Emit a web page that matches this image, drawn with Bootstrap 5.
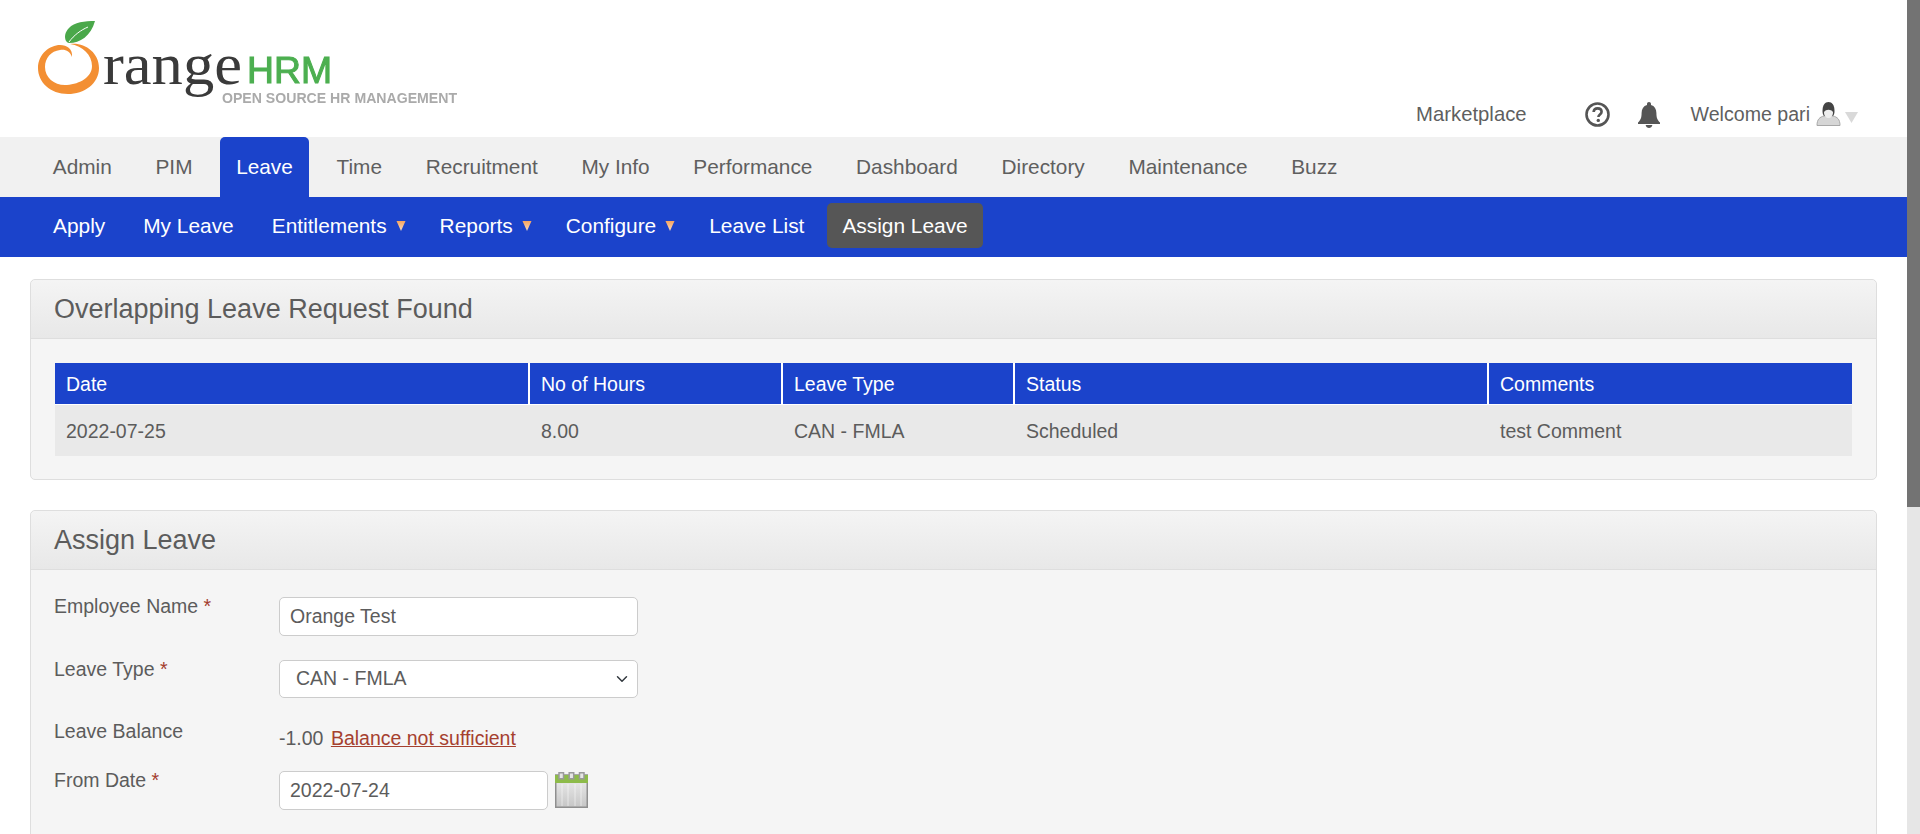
<!DOCTYPE html>
<html lang="en">
<head>
  <meta charset="UTF-8" />
  <meta name="viewport" content="width=device-width, initial-scale=1.0" />
  <title>OrangeHRM - Assign Leave</title>
  <link href="https://cdn.jsdelivr.net/npm/bootstrap@5.3.3/dist/css/bootstrap.min.css" rel="stylesheet" />
  <style>
    html, body { height: 834px; overflow: hidden; }
    body {
      font-family: "Liberation Sans", Arial, sans-serif;
      color: #5c5c5c;
      font-size: 19.5px;
      background: #fff;
    }
    /* page + fake scrollbar */
    .page-wrap { height: 834px; }
    .page-main { flex: 1 1 auto; min-width: 0; overflow: hidden; }
    .fake-scroll { flex: 0 0 13px; width: 13px; background: #e6e6e6; }
    .fake-thumb { height: 507px; background: #737373; }

    /* top header */
    .top-head { height: 137px; }
    .logo-svg { filter: blur(.4px); }
    .top-links { padding: 102px 49px 0 0; height: 137px; font-size: 20.3px; color: #5f5f5f; }
    .top-links a { color: inherit; text-decoration: none; }
    .market-link { margin-right: 58px; line-height: 25px; }
    .bell-ico { margin: 0 31px 0 28px; }
    .welcome-txt { line-height: 25px; margin-right: 6px; font-size: 19.6px; }

    /* main tabs */
    .main-tabs { height: 60px; background: #f1f1f1; padding-left: 37px; gap: 12px; }
    .main-tabs a {
      display: block; padding: 0 15.85px; height: 60px; line-height: 60px;
      font-size: 20.8px; color: #5f5f5f; text-decoration: none; border-radius: 5px 5px 0 0;
    }
    .main-tabs a.on { background: #1b43cb; color: #fff; }

    /* sub menu */
    .sub-tabs { height: 60px; background: #1b43cb; padding: 6px 0 0 38px; gap: 8px; }
    .sub-tabs a {
      display: block; position: relative; height: 45px; line-height: 45px; padding: 0 15px;
      font-size: 20.88px; color: #fff; text-decoration: none; border-radius: 5px;
    }
    .sub-tabs a.has-arrow { padding-right: 30px; }
    .sub-tabs a.on { background: #565656; }
    .sub-arrow { position: absolute; right: 11px; top: 18px; }

    /* panels */
    .hr-panel.card { margin: 22px 30px 0 30px; background: #f5f5f5; border: 1px solid #dedede; border-radius: 5px; }
    .hr-panel + .hr-panel.card { margin-top: 30px; }
    .hr-panel .card-header {
      height: 59px; line-height: 58px; padding: 0 0 0 23px; font-size: 27px; color: #5c5c5c;
      background: linear-gradient(#f4f4f4, #e8e8e8); border-bottom: 1px solid #dedede;
    }
    .over-body { padding: 24px 24px 23px 24px; }
    .form-body { padding: 27px 23px 0 23px; height: 400px; }

    .leave-tbl { table-layout: fixed; width: 1797px; border-collapse: separate; border-spacing: 0; font-size: 19.5px; }
    .leave-tbl th {
      background: #1b43cb; color: #fff; font-weight: 400; height: 42px; padding: 0 11px;
      border-right: 2px solid #fff; border-bottom: 1px solid #fff; line-height: 38px;
    }
    .leave-tbl th:last-child { border-right: 0; }
    .leave-tbl td { background: #e9e9e9; height: 51px; padding: 2px 11px 0 11px; color: #5c5c5c; }

    /* form rows */
    .f-row { display: flex; margin-bottom: 24px; }
    .f-label { flex: 0 0 225px; line-height: 16px; padding-top: 1px; font-size: 19.5px; color: #5c5c5c; }
    .req { color: #a33c2e; }
    .f-input.form-control, .f-input.form-select {
      width: 359px; height: 39px; font-size: 19.5px; color: #5c5c5c; border: 1px solid #ccc; border-radius: 5px;
      padding: 0 10px; background-color: #fff;
    }
    .f-input.form-select { padding-left: 16px; padding-right: 36px; height: 38px; background-position: right 7px center; }
    .f-input.date-in { width: 269px; }
    .cal-ico { margin-left: 7px; margin-top: 1px; }
    .bal-line { margin-top: 7px; line-height: 18px; }
    .bal-warn { color: #a5402f; margin-left: 2px; text-decoration: underline; }
  </style>
</head>
<body>
<svg width="0" height="0" class="position-absolute">
  <defs>
    <linearGradient id="calGrad" x1="0" y1="0" x2="0" y2="1"><stop offset="0" stop-color="#eeeeee"/><stop offset="1" stop-color="#c6c6c6"/></linearGradient>
    <linearGradient id="arrowGrad" x1="0" y1="0" x2="0" y2="1"><stop offset="0" stop-color="#f7a45e"/><stop offset="1" stop-color="#f9dcc0"/></linearGradient>
    <symbol id="calIcon" viewBox="0 0 33 36">
      <rect x=".75" y="3" width="31.5" height="32.25" fill="url(#calGrad)" stroke="#8f8f8f" stroke-width="1.5"/>
      <rect x="0" y="3" width="33" height="8" fill="#8dbb4a"/>
      <g fill="#e6e6e6" stroke="#9a9a9a" stroke-width="1.5">
        <rect x="4" y=".75" width="4.5" height="6"/>
        <rect x="14.2" y=".75" width="4.5" height="6"/>
        <rect x="24.5" y=".75" width="4.5" height="6"/>
      </g>
      <g stroke="#fff" stroke-width="1" opacity=".5">
        <path d="M7 12V34M13 12V34M20 12V34M26 12V34"/>
      </g>
    </symbol>
  </defs>
</svg>

<div class="page-wrap d-flex">
  <div class="page-main">

    <!-- header -->
    <div class="top-head d-flex justify-content-between">
      <svg class="logo-svg" width="470" height="112" viewBox="0 0 470 112" role="img" aria-label="OrangeHRM logo">
        <path d="M95 21C85 21 74 22 69 28 65 32 64 37 66 41 67 42 68 43 69 43 80 43 91 36 95 21Z" fill="#4aa84a"/>
        <path d="M69 42C74 35 81 30 88 27" fill="none" stroke="#fff" stroke-width="1"/>
        <path d="M70 44C84 42 99 52 99 68 99 84 84 94 68 94 50 94 38 82 38 68 38 54 50 45 60 45 67 45 73 49 72 57 70 51 65 49 60 50 51 51 45 58 45 67 45 78 55 86 67 85 80 84 92 77 92 66 92 55 83 46 70 44Z" fill="#f38f33"/>
        <text x="103" y="84" font-family="Liberation Serif, serif" font-size="60" fill="#3a3a3a" textLength="139" lengthAdjust="spacingAndGlyphs">range</text>
        <text x="247" y="83" font-family="Liberation Sans, sans-serif" font-size="36" fill="#4caf50" stroke="#4caf50" stroke-width="1" textLength="85" lengthAdjust="spacingAndGlyphs">HRM</text>
        <text x="222" y="103" font-family="Liberation Sans, sans-serif" font-size="14.5" font-weight="700" fill="#aaa" textLength="235" lengthAdjust="spacingAndGlyphs">OPEN SOURCE HR MANAGEMENT</text>
      </svg>
      <div class="top-links d-flex align-items-start">
        <a href="#" class="market-link">Marketplace</a>
        <svg width="25" height="25" viewBox="0 0 25 25"><circle cx="12.5" cy="12.5" r="11" fill="none" stroke="#555" stroke-width="2.6"/><path d="M8.6 10C8.8 7.6 10.4 6.4 12.6 6.4 15 6.4 16.6 7.8 16.6 9.8 16.6 12.4 13.4 12.6 13.4 15" fill="none" stroke="#555" stroke-width="2.6"/><circle cx="13.3" cy="18.4" r="1.7" fill="#555"/></svg>
        <svg class="bell-ico" width="22" height="26" viewBox="0 0 22 26"><path d="M11 0C12.2 0 13 .8 13 2V3C16.6 4 18.4 7 18.4 11 18.4 16 19.6 18.4 22 20.4V22H0V20.4C2.4 18.4 3.6 16 3.6 11 3.6 7 5.4 4 9 3V2C9 .8 9.8 0 11 0Z" fill="#555"/><path d="M7.6 23H14.4C14 25 12.6 26 11 26S8 25 7.6 23Z" fill="#555"/></svg>
        <span class="welcome-txt">Welcome pari</span>
        <svg width="25" height="24" viewBox="0 0 25 24"><path d="M1 23.5C1 17 4 15 8 14L17 14C21 15 24 17 24 23.5Z" fill="#d6d6d6" stroke="#a8a8a8"/><path d="M6.5 9C6.5 3 9 0 12.5 0S18.5 3 18.5 9C18.5 11 18 13 17 14H8C7 13 6.5 11 6.5 9Z" fill="#444"/><path d="M8 10C10 7 15 7 17 10 17 14 15 16 12.5 16S8 14 8 10Z" fill="#eee"/></svg>
        <svg class="ms-1" width="13" height="25" viewBox="0 0 13 25"><path d="M0 10H13L6.5 21Z" fill="#d9d9d9"/></svg>
      </div>
    </div>

    <!-- main menu -->
    <nav class="main-tabs d-flex">
      <a href="#">Admin</a>
      <a href="#">PIM</a>
      <a href="#" class="on">Leave</a>
      <a href="#">Time</a>
      <a href="#">Recruitment</a>
      <a href="#">My Info</a>
      <a href="#">Performance</a>
      <a href="#">Dashboard</a>
      <a href="#">Directory</a>
      <a href="#">Maintenance</a>
      <a href="#">Buzz</a>
    </nav>

    <!-- leave sub menu -->
    <nav class="sub-tabs d-flex">
      <a href="#">Apply</a>
      <a href="#">My Leave</a>
      <a href="#" class="has-arrow">Entitlements<svg class="sub-arrow" width="10" height="10" viewBox="0 0 10 10"><path d="M.5 0H9.500L5 10Z" fill="url(#arrowGrad)"/></svg></a>
      <a href="#" class="has-arrow">Reports<svg class="sub-arrow" width="10" height="10" viewBox="0 0 10 10"><path d="M.5 0H9.500L5 10Z" fill="url(#arrowGrad)"/></svg></a>
      <a href="#" class="has-arrow">Configure<svg class="sub-arrow" width="10" height="10" viewBox="0 0 10 10"><path d="M.5 0H9.500L5 10Z" fill="url(#arrowGrad)"/></svg></a>
      <a href="#">Leave List</a>
      <a href="#" class="on">Assign Leave</a>
    </nav>

    <!-- overlapping leave -->
    <div class="card hr-panel">
      <div class="card-header">Overlapping Leave Request Found</div>
      <div class="over-body">
        <table class="leave-tbl">
          <colgroup>
            <col style="width: 475px" />
            <col style="width: 253px" />
            <col style="width: 232px" />
            <col style="width: 474px" />
            <col style="width: 363px" />
          </colgroup>
          <thead>
            <tr><th>Date</th><th>No of Hours</th><th>Leave Type</th><th>Status</th><th>Comments</th></tr>
          </thead>
          <tbody>
            <tr><td>2022-07-25</td><td>8.00</td><td>CAN - FMLA</td><td>Scheduled</td><td>test Comment</td></tr>
          </tbody>
        </table>
      </div>
    </div>

    <!-- assign leave form -->
    <div class="card hr-panel">
      <div class="card-header">Assign Leave</div>
      <form class="form-body">
        <div class="f-row">
          <label class="f-label">Employee Name <span class="req">*</span></label>
          <input type="text" class="form-control f-input" value="Orange Test" />
        </div>
        <div class="f-row">
          <label class="f-label">Leave Type <span class="req">*</span></label>
          <select class="form-select f-input"><option>CAN - FMLA</option></select>
        </div>
        <div class="f-row">
          <label class="f-label">Leave Balance</label>
          <div class="bal-line">-1.00 <a href="#" class="bal-warn">Balance not sufficient</a></div>
        </div>
        <div class="f-row">
          <label class="f-label">From Date <span class="req">*</span></label>
          <input type="text" class="form-control f-input date-in" value="2022-07-24" />
          <svg class="cal-ico" width="33" height="36" viewBox="0 0 33 36"><use href="#calIcon"/></svg>
        </div>
        <div class="f-row">
          <div class="f-label"></div>
          <input type="text" class="form-control f-input date-in" />
          <svg class="cal-ico" width="33" height="36" viewBox="0 0 33 36"><use href="#calIcon"/></svg>
        </div>
      </form>
    </div>

  </div>
  <div class="fake-scroll"><div class="fake-thumb"></div></div>
</div>

<script src="https://cdn.jsdelivr.net/npm/bootstrap@5.3.3/dist/js/bootstrap.bundle.min.js"></script>
</body>
</html>
